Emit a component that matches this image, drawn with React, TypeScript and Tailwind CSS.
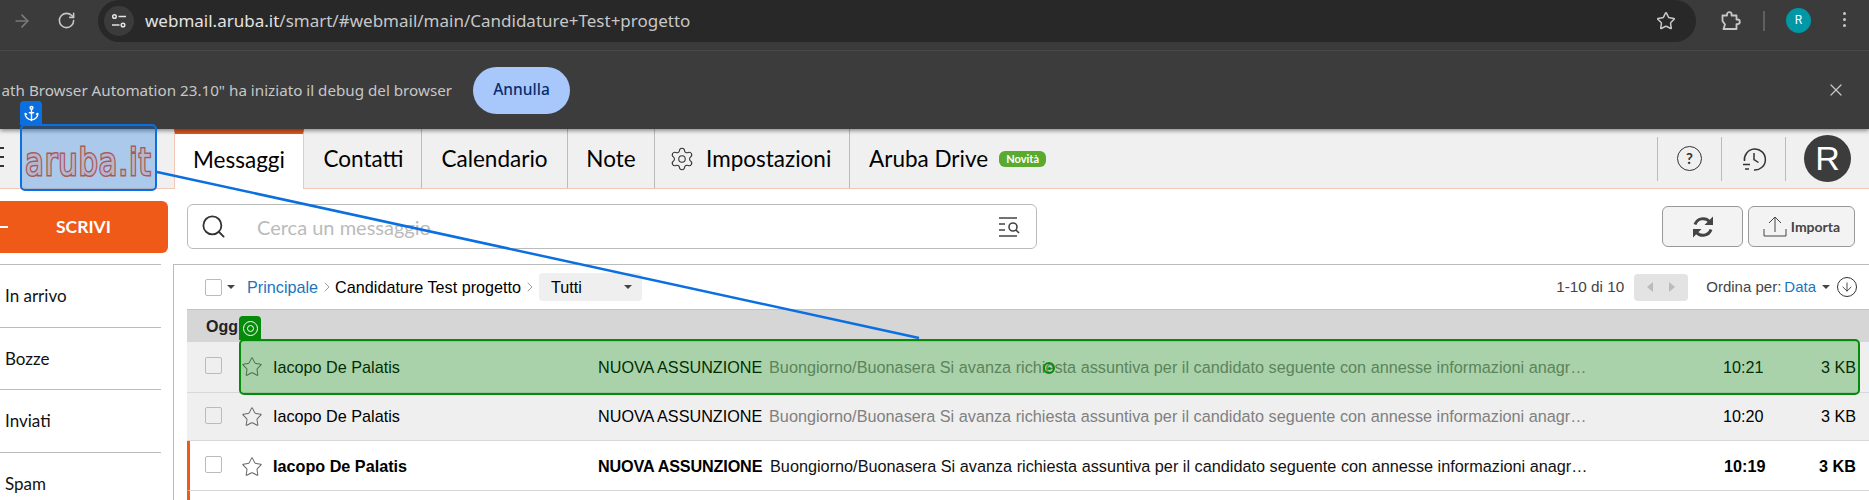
import React from 'react';
import { ArrowRight, ArrowDown, RotateCw, Star, X, Settings, Search, Anchor, ChevronRight } from 'lucide-react';

const Caret = ({ className = '' }: { className?: string }) => (
  <span className={`inline-block w-0 h-0 border-x-[4px] border-x-transparent border-t-[4px] border-t-[#444] ${className}`} />
);

const Checkbox = ({ className = '' }: { className?: string }) => (
  <span className={`block w-[17px] h-[17px] shrink-0 rounded-[2px] border border-[#bbb] ${className}`} />
);

const TuneIcon = () => (
  <svg width="16" height="16" viewBox="0 0 16 16" fill="none" stroke="#e3e3e3" strokeWidth="1.5">
    <circle cx="3.5" cy="3.5" r="1.8" />
    <path d="M7.5 3.5H15" />
    <circle cx="12" cy="12" r="1.8" />
    <path d="M1 12H8.5" />
  </svg>
);

const ExtensionIcon = () => (
  <svg width="22" height="22" viewBox="0 0 22 22" fill="none" stroke="#c7c7c7" strokeWidth="1.8" strokeLinejoin="round">
    <path d="M3.5 5.5H8V4.5a2.3 2.3 0 0 1 4.6 0v1h4.9v4h1a2.3 2.3 0 0 1 0 4.6h-1V19H4.5l1.5-4.5-2.5-3.5z" />
  </svg>
);

const HistoryIcon = () => (
  <svg width="26" height="26" viewBox="0 0 26 26" fill="none" stroke="#333" strokeWidth="1.5">
    <path d="M3.5 15A10.5 10.5 0 1 1 13 24" />
    <path d="M13 7V13.5L17.5 16.5" />
    <path d="M2 18.5H9M4 23H8" />
  </svg>
);

const FilterIcon = () => (
  <svg width="24" height="20" viewBox="0 0 24 20" fill="none" stroke="#444" strokeWidth="1.6">
    <path d="M0 1H18M0 19H18M0 7H6M0 13H6" />
    <circle cx="14" cy="10" r="4" />
    <path d="M17 13L20 16" />
  </svg>
);

const UploadIcon = () => (
  <svg width="24" height="21" viewBox="0 0 24 21" fill="none" stroke="#444" strokeWidth="1">
    <path d="M12 16V1M6 7L12 1L18 7" />
    <path d="M1 13V20H23V13" />
  </svg>
);

const SyncIcon = () => (
  <svg width="24" height="24" viewBox="0 0 24 24" fill="none" stroke="#444" strokeWidth="3">
    <path d="M4 9.5A8.6 8.6 0 0 1 18.5 6.5" />
    <path d="M22 1.5V10H13.5Z" fill="#444" stroke="none" />
    <path d="M20 14.5A8.6 8.6 0 0 1 5.5 17.5" />
    <path d="M2 22.5V14H10.5Z" fill="#444" stroke="none" />
  </svg>
);

const tabs = [
  { label: 'Contatti', width: 'w-[118px] pl-[2px]' },
  { label: 'Calendario', width: 'w-[146px]' },
  { label: 'Note', width: 'w-[87px]' },
];

const Nav = () => (
  <div className="flex h-[60px] bg-[#f0f0f0] border-b border-[#f3c7b6] font-['Lato',sans-serif] text-[22.5px] text-black">
    <div className="w-[174px] flex flex-col justify-center gap-[7px] pb-[3px]">
      <span className="block w-[4px] h-[2px] bg-[#333]" />
      <span className="block w-[4px] h-[2px] bg-[#333]" />
      <span className="block w-[4px] h-[2px] bg-[#333]" />
    </div>
    <div className="w-[130px] h-[60px] bg-white border-t-[5px] border-t-[#e0561b] border-x border-x-[#f3c7b6] flex items-center justify-center pb-[3px]">
      Messaggi
    </div>
    {tabs.map((t) => (
      <div key={t.label} className={`${t.width} border-r border-[#bbb] flex items-center justify-center`}>
        {t.label}
      </div>
    ))}
    <div className="w-[195px] border-r border-[#bbb] flex items-center pl-[14px] gap-[11px]">
      <Settings size={26} strokeWidth={1} color="#333" />
      Impostazioni
    </div>
    <div className="flex items-center pl-[19px]">
      Aruba Drive
      <span className="ml-[11px] w-[47px] h-[16px] rounded-[6px] bg-[#5aaa2e] text-white text-[11px] font-bold leading-[16px] text-center">Novità</span>
    </div>
    <div className="ml-auto flex items-center h-[59px]">
      <div className="w-[64px] h-[44px] border-l border-[#bbb] flex items-center justify-center">
        <span className="w-[25px] h-[25px] rounded-full border-[1.5px] border-[#333] text-[#333] text-[15px] font-bold leading-[22px] text-center">?</span>
      </div>
      <div className="w-[64px] h-[44px] border-l border-[#bbb] flex items-center justify-center">
        <HistoryIcon />
      </div>
      <div className="w-[83px] h-[44px] border-l border-[#bbb] flex items-center pl-[18px]">
        <span className="shrink-0 w-[47px] h-[47px] rounded-full bg-[#3c3c3c] text-white text-[34px] leading-[47px] text-center font-['Liberation_Sans',sans-serif]">R</span>
      </div>
      <span className="w-[1px]" />
    </div>
  </div>
);

const Sidebar = () => (
  <div className="w-[173px] shrink-0 pt-[12px] font-['Lato',sans-serif]">
    <div className="w-[168px] h-[52px] bg-[#f05a19] rounded-r-md flex items-center text-white font-bold text-[17.5px]">
      <span className="block w-[8px] h-[2px] bg-white" />
      <span className="ml-[48px]">SCRIVI</span>
    </div>
    <div className="mt-[11px] w-[161px] text-[17px] text-[#111]">
      {['In arrivo', 'Bozze', 'Inviati', 'Spam'].map((s) => (
        <div key={s} className="h-[62.67px] border-t border-[#bbb] flex items-center pl-[5px]">{s}</div>
      ))}
    </div>
  </div>
);

type RowProps = { time: string; unread?: boolean; height: string };

const Row = ({ time, unread, height }: RowProps) => (
  <div className={`flex items-center ${height} border-b border-[#d8d8d8] ${unread ? 'bg-white border-l-[3px] border-l-[#f05a19] pl-[15px] pt-[2px] font-bold' : 'bg-[#efefef] pl-[18px]'} pr-[13px] font-['Liberation_Sans',sans-serif] text-[16.2px] text-black`}>
    <Checkbox className={unread ? '-mt-[5px]' : '-mt-[3px]'} />
    <Star size={22} strokeWidth={1.1} color="#666" className="ml-[19px] shrink-0" />
    <span className="ml-[10px] w-[325px] shrink-0 whitespace-nowrap">Iacopo De Palatis</span>
    <span className={`${unread ? 'w-[172px] tracking-[-0.15px]' : 'w-[171px]'} shrink-0 whitespace-nowrap`}>NUOVA ASSUNZIONE</span>
    <span className={`w-[814px] shrink-0 whitespace-nowrap font-normal text-[16.25px] ${unread ? 'text-[#111]' : 'text-[#808080]'}`}>
      Buongiorno/Buonasera Si avanza richiesta assuntiva per il candidato seguente con annesse informazioni anagr…
    </span>
    <span className="ml-[140px] w-[39px] shrink-0">{time}</span>
    <span className="ml-auto whitespace-nowrap">3 KB</span>
  </div>
);

const Content = () => (
  <div className="flex-1 min-w-0">
    <div className="h-[75px] flex items-start justify-between pt-[15px] pl-[14px] pr-[14px]">
      <div className="w-[850px] h-[45px] rounded-md border border-[#bbb] flex items-center pl-[12px] pr-[13px] font-['Lato',sans-serif]">
        <Search size={27} strokeWidth={1.6} color="#333" />
        <span className="ml-[30px] text-[20px] text-[#bbb]">Cerca un messaggio</span>
        <span className="ml-auto"><FilterIcon /></span>
      </div>
      <div className="flex gap-[5px] mt-[2px]">
        <div className="w-[81px] h-[41px] rounded-md border border-[#999] bg-[#f3f3f3] flex items-center justify-center">
          <SyncIcon />
        </div>
        <div className="w-[107px] h-[41px] rounded-md border border-[#999] bg-[#f3f3f3] flex items-center justify-center gap-[4px] font-['Lato',sans-serif] text-[14px] font-bold text-[#444]">
          <UploadIcon />
          Importa
        </div>
      </div>
    </div>
    <div className="border-t border-l border-[#bbb] pl-[13px] h-[236px] overflow-hidden font-['Liberation_Sans',sans-serif]">
      <div className="h-[44px] flex items-center pl-[18px] pr-[12px] text-[16.2px] text-black">
        <Checkbox />
        <Caret className="ml-[5px]" />
        <span className="ml-[12px] text-[#1b75bc]">Principale</span>
        <ChevronRight size={16} strokeWidth={1.2} color="#888" className="ml-[1px]" />
        <span>Candidature Test progetto</span>
        <ChevronRight size={16} strokeWidth={1.2} color="#888" className="ml-[1px]" />
        <div className="ml-[1px] w-[103px] h-[28px] rounded-[4px] bg-[#efefef] flex items-center pl-[12px]">
          Tutti
          <Caret className="ml-[42px]" />
        </div>
        <span className="ml-auto text-[15.3px] text-[#444]">1-10 di 10</span>
        <div className="ml-[10px] w-[54px] h-[27px] rounded-[4px] bg-[#e3e3e3] flex items-center justify-center gap-[16px]">
          <span className="w-0 h-0 border-y-[5px] border-y-transparent border-r-[6px] border-r-[#bbb]" />
          <span className="w-0 h-0 border-y-[5px] border-y-transparent border-l-[6px] border-l-[#bbb]" />
        </div>
        <span className="ml-[18px] text-[15px] text-[#444]">Ordina per:</span>
        <span className="ml-[3px] text-[15px] text-[#1b75bc]">Data</span>
        <Caret className="ml-[6px]" />
        <span className="ml-[7px] w-[20px] h-[20px] rounded-full border border-[#333] flex items-center justify-center">
          <ArrowDown size={14} strokeWidth={1.5} color="#333" />
        </span>
      </div>
      <div className="h-[33px] bg-[#d6d6d6] border-t border-[#c4c4c4] flex items-center pl-[19px] text-[16px] font-bold text-[#222] pt-[1px]">Ogg</div>
      <Row time="10:21" height="h-[51px]" />
      <Row time="10:20" height="h-[48px]" />
      <Row time="10:19" height="h-[50px]" unread />
      <div className="h-[20px] border-l-[3px] border-[#f05a19] bg-white" />
    </div>
  </div>
);

export default function App() {
  return (
    <div className="relative w-[1869px] h-[500px] overflow-hidden bg-white">
      <div className="h-[50px] bg-[#3b3b3b] flex items-start text-[#c7c7c7]">
        <ArrowRight size={20} color="#7a7a7a" className="ml-[12px] mt-[11px]" />
        <RotateCw size={19} color="#c7c7c7" className="ml-[25px] mt-[11px]" />
        <div className="ml-[22px] w-[1598px] h-[42px] rounded-full bg-[#282828] flex items-center pl-[6px] pr-[20px] font-['Noto_Sans',sans-serif] text-[17px]">
          <span className="w-[30px] h-[30px] rounded-full bg-[#3b3b3b] flex items-center justify-center"><TuneIcon /></span>
          <span className="ml-[11px] text-[#e3e3e3]">webmail.aruba.it</span>
          <span className="text-[#c7c7c7]">/smart/#webmail/main/Candidature+Test+progetto</span>
          <Star size={20} strokeWidth={1.8} color="#c7c7c7" className="ml-auto" />
        </div>
        <span className="ml-[23px] mt-[10px]"><ExtensionIcon /></span>
        <span className="ml-[22px] mt-[11px] w-[2px] h-[20px] bg-[#5f5f5f]" />
        <span className="ml-[21px] mt-[8px] w-[25px] h-[25px] rounded-full bg-[#0097a7] text-white text-[12px] leading-[25px] text-center font-['Roboto',sans-serif]">R</span>
        <span className="ml-[32px] mt-[12px] flex flex-col gap-[3px]">
          <span className="block w-[3px] h-[3px] rounded-full bg-[#c7c7c7]" />
          <span className="block w-[3px] h-[3px] rounded-full bg-[#c7c7c7]" />
          <span className="block w-[3px] h-[3px] rounded-full bg-[#c7c7c7]" />
        </span>
      </div>
      <div className="relative z-10 h-[79px] bg-[#3c3c3c] border-t border-[#4a4a4a] shadow-[0_2px_4px_rgba(0,0,0,0.4)] flex items-center font-['Noto_Sans',sans-serif] text-[#c7c7c7]">
        <div className="w-[452px] shrink-0 flex justify-end overflow-hidden whitespace-nowrap text-[15.2px]">ath Browser Automation 23.10" ha iniziato il debug del browser</div>
        <div className="ml-[21px] w-[97px] h-[47px] rounded-full bg-[#a8c7fa] text-[#062e6f] text-[15.5px] font-medium flex items-center justify-center">Annulla</div>
        <X size={20} strokeWidth={1.5} className="ml-auto mr-[23px]" />
      </div>
      <Nav />
      <div className="flex">
        <Sidebar />
        <Content />
      </div>

      {/* UiPath selection overlays */}
      <svg className="absolute left-0 top-0 z-20 pointer-events-none" width="1869" height="500">
        <line x1="157" y1="172" x2="919" y2="338" stroke="#0b6fe0" strokeWidth="2.5" />
      </svg>
      <div className="absolute z-20 left-[20px] top-[101px] w-[22px] h-[24px] rounded-t-[4px] bg-[#0b6fe0] flex items-center justify-center">
        <Anchor size={17} color="#fff" strokeWidth={2} />
      </div>
      <div className="absolute z-20 left-[20px] top-[124px] w-[137px] h-[67px] rounded-[5px] border-[2.5px] border-[#0b6fe0] bg-[#0b6fe0]/30 flex items-center justify-center overflow-hidden">
        <span className="font-['DejaVu_Sans',sans-serif] font-normal text-[30px] leading-none mt-[8px] tracking-[1.2px] scale-y-125 text-[#b9b4cf] [-webkit-text-stroke:2.5px_#a85c58] [paint-order:stroke_fill]">aruba.it</span>
      </div>
      <div className="absolute z-20 left-[239px] top-[316px] w-[22px] h-[24px] rounded-t-[4px] bg-[#068a0a] flex items-center justify-center">
        <span className="w-[15px] h-[15px] rounded-full border border-white flex items-center justify-center">
          <span className="w-[7px] h-[7px] rounded-full border border-white" />
        </span>
      </div>
      <div className="absolute z-20 left-[239px] top-[339px] w-[1621px] h-[56px] rounded-[5px] border-[2.5px] border-[#068a0a] bg-[#0a8f0a]/30" />
      <div className="absolute z-20 left-[1043px] top-[362px] w-[12px] h-[12px] rounded-full border-2 border-[#068a0a] flex items-center justify-center">
        <span className="w-[3px] h-[3px] rounded-full bg-[#068a0a]" />
      </div>
    </div>
  );
}
